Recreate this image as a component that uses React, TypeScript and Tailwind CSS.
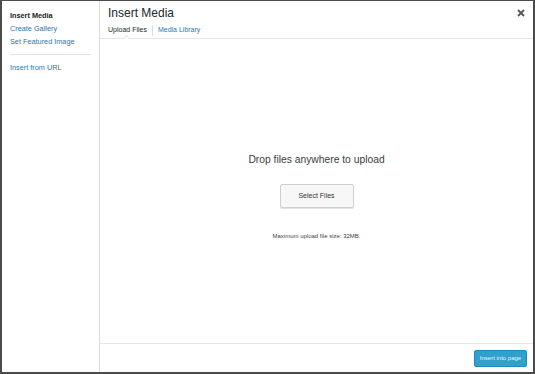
import React from 'react';

const font = { fontFamily: '"Liberation Sans", Arial, sans-serif' };

export default function App() {
  return (
    <div
      className="w-[535px] h-[374px] bg-white border-t border-l-2 border-r-2 border-b-2 border-[#4b4b4b] flex text-[#333]"
      style={font}
    >
      {/* Sidebar menu */}
      <div className="w-[98px] shrink-0 border-r border-[#dcdcdc] pt-[8px] px-[8px]">
        <div className="text-[7.3px] font-bold text-[#222] leading-[13px]">Insert Media</div>
        <div className="text-[7.3px] text-[#2a78b8] leading-[13px]">Create Gallery</div>
        <div className="text-[7.3px] text-[#2a78b8] leading-[13px]">Set Featured Image</div>
        <div className="h-px bg-[#e3e3e3] mt-[6px] mb-[6px]"></div>
        <div className="text-[7.3px] text-[#2a78b8] leading-[13px]">Insert from URL</div>
      </div>

      {/* Main frame */}
      <div className="flex-1 flex flex-col">
        {/* Header */}
        <div className="relative h-[38px] border-b border-[#e5e5e5] pl-[8px] pr-[8px]">
          <div className="flex items-start justify-between">
            <div className="text-[12px] text-[#23282d] leading-[16px] pt-[4px] scale-y-105">Insert Media</div>
            <svg width="8" height="8" viewBox="0 0 8 8" className="mt-[8px]">
              <path d="M1 1L7 7M7 1L1 7" stroke="#555" strokeWidth="1.8" />
            </svg>
          </div>
          <div className="flex items-center mt-[3px] text-[7px] leading-[12px]">
            <span className="text-[#23282d]">Upload Files</span>
            <span className="w-px h-[11px] bg-[#dddddd] mx-[5px]"></span>
            <span className="text-[#2a78b8]">Media Library</span>
          </div>
          <div className="absolute left-[24px] bottom-[-3px] w-[5px] h-[5px] bg-white border-l border-t border-[#e5e5e5] rotate-45"></div>
        </div>

        {/* Uploader */}
        <div className="flex-1 flex flex-col items-center pt-[114px]">
          <div className="text-[10.3px] text-[#3c3c3c] leading-[14px]">Drop files anywhere to upload</div>
          <div className="mt-[17px] w-[74px] h-[24px] border border-[#cfcfcf] bg-[#f7f7f7] rounded-[2px] shadow-[0_1px_0_#e2e2e2] flex items-center justify-center text-[7px] text-[#333]">
            Select Files
          </div>
          <div className="mt-[24px] text-[6px] text-[#444] leading-[8px]">Maximum upload file size: 32MB.</div>
        </div>

        {/* Toolbar */}
        <div className="h-[29px] border-t border-[#e5e5e5] flex items-center justify-end pr-[6px]">
          <div className="w-[53px] h-[17px] bg-[#2ea2cc] border border-[#1e8cbe] rounded-[2px] flex items-center justify-center text-[6px] text-[#e8f5fb]">
            Insert into page
          </div>
        </div>
      </div>
    </div>
  );
}
